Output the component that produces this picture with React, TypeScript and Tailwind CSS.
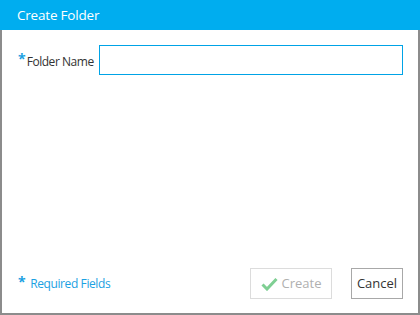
import React from "react";

const font = { fontFamily: '"Open Sans", "Noto Sans", sans-serif' };

const CreateFolderDialog: React.FC = () => {
  return (
    <div className="w-[420px] h-[315px] flex flex-col bg-white" style={font}>
      <div className="h-[30px] bg-[#00adef] text-white text-[13.5px] tracking-[-0.2px] flex items-center pl-[17px]">
        Create Folder
      </div>
      <div className="flex-1 flex flex-col border-l-2 border-r-2 border-b-2 border-[#8c8c8c]">
        <div className="flex items-center mt-[15px] pl-[16px] pr-[15px]">
          <span className="text-[#1ba1e2] text-[14px] font-bold leading-none self-start mt-[7px]">*</span>
          <span className="text-[12px] tracking-[-0.45px] text-[#333] ml-[1px] mr-[5px] pt-[3px]">Folder Name</span>
          <input
            type="text"
            className="flex-1 h-[30px] border border-[#00a3e6] outline-none px-2 text-[12px]"
          />
        </div>
        <div className="flex-1" />
        <div className="flex items-center justify-between pl-[16px] pr-[15px] mb-[14px]">
          <div className="flex items-center text-[12px] tracking-[-0.4px] text-[#1ba1e2]">
            <span className="text-[14px] font-bold leading-none mr-[5px] -mt-[3px]">*</span>
            Required Fields
          </div>
          <div className="flex items-center gap-[19px]">
            <button className="w-[82px] h-[31px] border border-[#dcdcdc] flex items-center justify-center text-[13px] text-[#b0b0b0] bg-white">
              <svg width="17" height="14" viewBox="0 0 17 14" className="mr-[4px]">
                <path d="M1.5 7.5 L6 12 L15.5 2" fill="none" stroke="#7fcf93" strokeWidth="3" />
              </svg>
              Create
            </button>
            <button className="w-[52px] h-[31px] border border-[#a8a8a8] flex items-center justify-center text-[13px] text-[#333] bg-white">
              Cancel
            </button>
          </div>
        </div>
      </div>
    </div>
  );
};

export default function App() {
  return <CreateFolderDialog />;
}
